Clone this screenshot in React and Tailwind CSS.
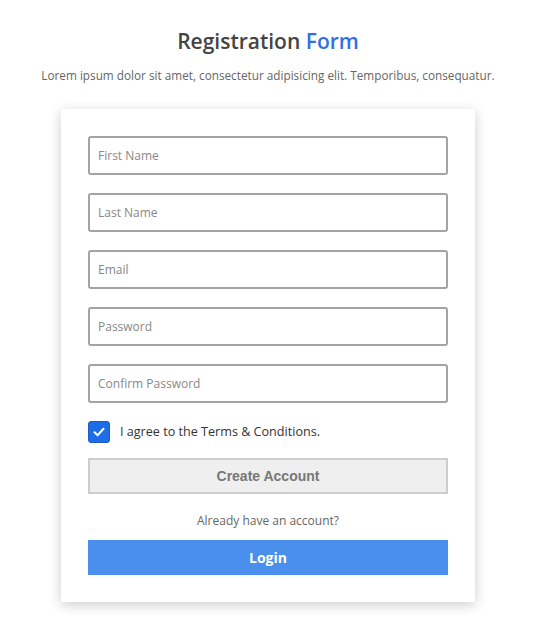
import React from 'react';

const fields = ['First Name', 'Last Name', 'Email', 'Password', 'Confirm Password'];

export default function App() {
  return (
    <div className="min-h-screen bg-white pt-[26px] font-['Open_Sans',sans-serif]">
      <h1 className="text-center text-[21px] leading-[30px] font-semibold text-[#444]">
        Registration <span className="text-[#2f6fe9]">Form</span>
      </h1>
      <p className="mt-[11px] text-center text-[11.75px] leading-[16px] text-[#666]">
        Lorem ipsum dolor sit amet, consectetur adipisicing elit. Temporibus, consequatur.
      </p>

      <div className="mx-auto mt-[26px] w-[414px] bg-white px-[27px] pt-[27px] pb-[27px] shadow-[0_3px_12px_rgba(0,0,0,0.2)]">
        <div className="flex flex-col gap-[18px]">
          {fields.map((f) => (
            <input
              key={f}
              type={f.includes('Password') ? 'password' : 'text'}
              placeholder={f}
              className="h-[39px] w-full rounded-[3px] border-2 border-[#a3a3a3] px-[8px] text-[12px] text-[#333] outline-none placeholder:text-[#888]"
            />
          ))}
        </div>

        <label className="mt-[18px] flex items-center gap-[10px]">
          <span className="flex h-[22px] w-[22px] items-center justify-center rounded-[3px] border border-[#1a5bc4] bg-[#1d6ee6]">
            <svg width="14" height="14" viewBox="0 0 14 14" fill="none">
              <path d="M2.5 7.2 L5.6 10.2 L11.5 3.8" stroke="white" strokeWidth="2" strokeLinecap="round" strokeLinejoin="round" />
            </svg>
          </span>
          <span className="text-[12.6px] text-[#333]">I agree to the Terms &amp; Conditions.</span>
        </label>

        <button className="mt-[15px] h-[36px] w-full border-2 border-[#cdcdcd] bg-[#efefef] font-['Liberation_Sans',sans-serif] text-[14px] font-bold text-[#777]">
          Create Account
        </button>

        <p className="mt-[19px] text-center text-[12px] leading-[16px] text-[#666]">Already have an account?</p>

        <button className="mt-[11px] h-[35px] w-full bg-[#4a8feb] text-[14px] font-bold text-white">
          Login
        </button>
      </div>
    </div>
  );
}
